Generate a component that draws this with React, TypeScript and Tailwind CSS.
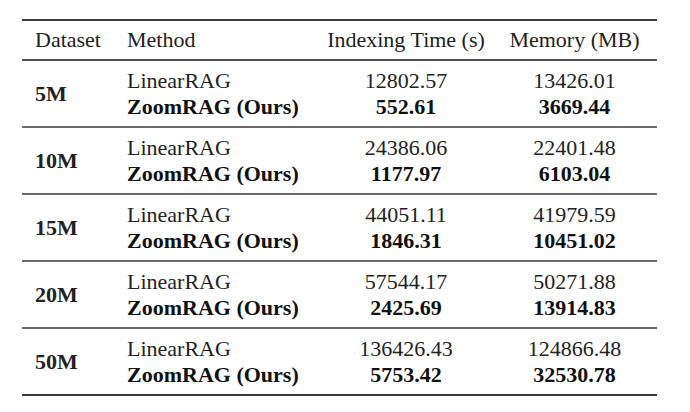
import React from "react";

type Row = { ds: string; lin: [string, string]; zoom: [string, string] };

const rows: Row[] = [
  { ds: "5M", lin: ["12802.57", "13426.01"], zoom: ["552.61", "3669.44"] },
  { ds: "10M", lin: ["24386.06", "22401.48"], zoom: ["1177.97", "6103.04"] },
  { ds: "15M", lin: ["44051.11", "41979.59"], zoom: ["1846.31", "10451.02"] },
  { ds: "20M", lin: ["57544.17", "50271.88"], zoom: ["2425.69", "13914.83"] },
  { ds: "50M", lin: ["136426.43", "124866.48"], zoom: ["5753.42", "32530.78"] },
];

export default function App() {
  return (
    <div className="w-[690px] h-[412px] bg-white pl-[22px] pt-[19px] text-[#222] text-[22px] leading-[26px] font-['Liberation_Serif','Times_New_Roman','Tinos','DejaVu_Serif',serif]">
      <div className="w-[635px]">
        <div className="h-[2px] bg-[#3a3a3a]" />
        <div className="grid grid-cols-[93px_205px_172px_165px] h-[38px] items-center">
          <div className="pl-[13px]">Dataset</div>
          <div className="pl-[12px]">Method</div>
          <div className="text-center">Indexing Time (s)</div>
          <div className="text-center">Memory (MB)</div>
        </div>
        <div className="h-[2px] bg-[#555]" />
        {rows.map((r, i) => (
          <div key={r.ds}>
            <div className="grid grid-cols-[93px_205px_172px_165px] h-[65px] items-center">
              <div className="pl-[13px] font-bold">{r.ds}</div>
              <div className="pl-[12px] flex flex-col pt-[1px]">
                <span>LinearRAG</span>
                <span className="font-bold text-[#111]">ZoomRAG (Ours)</span>
              </div>
              <div className="flex flex-col text-center pt-[1px]">
                <span>{r.lin[0]}</span>
                <span className="font-bold text-[#111]">{r.zoom[0]}</span>
              </div>
              <div className="flex flex-col text-center pt-[1px]">
                <span>{r.lin[1]}</span>
                <span className="font-bold text-[#111]">{r.zoom[1]}</span>
              </div>
            </div>
            <div className={i === rows.length - 1 ? "h-[2px] bg-[#3a3a3a]" : "h-[2px] bg-[#6a6a6a]"} />
          </div>
        ))}
      </div>
    </div>
  );
}
